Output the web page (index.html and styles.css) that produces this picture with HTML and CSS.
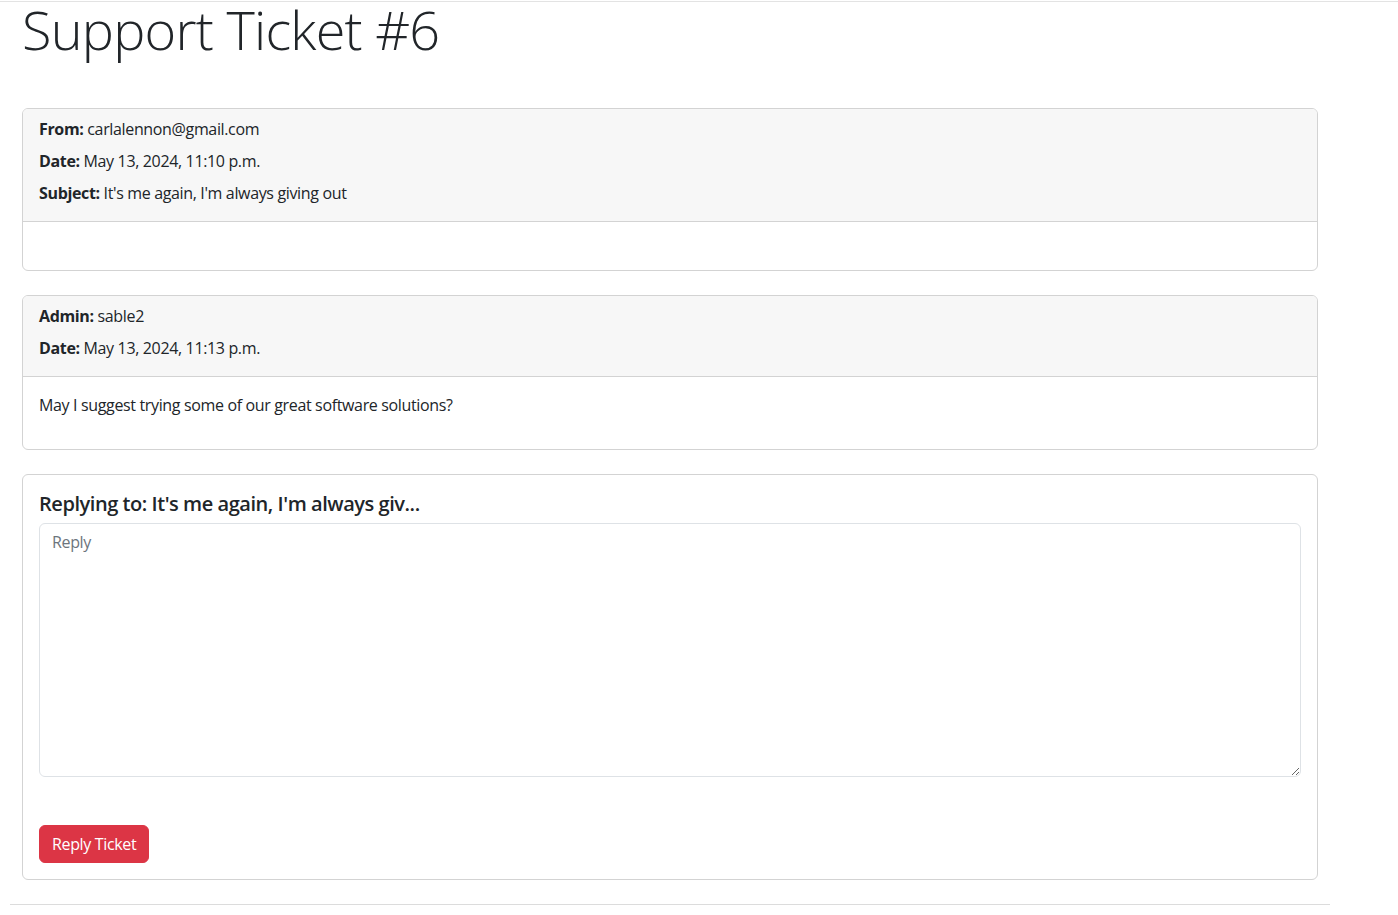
FILE: index.html
```html
<!DOCTYPE html>
<html>
<head>
<meta charset="utf-8">
<link rel="stylesheet" href="styles.css">
</head>
<body>
<div class="topline"></div>
<div class="page">
  <div class="content">
    <h1 class="title">Support Ticket #6</h1>
    <div class="card">
      <div class="card-header">
        <p><b>From:</b> carlalennon@gmail.com</p>
        <p><b>Date:</b> May 13, 2024, 11:10 p.m.</p>
        <p><b>Subject:</b> It's me again, I'm always giving out</p>
      </div>
      <div class="card-body"><p></p></div>
    </div>
    <div class="card">
      <div class="card-header">
        <p><b>Admin:</b> sable2</p>
        <p><b>Date:</b> May 13, 2024, 11:13 p.m.</p>
      </div>
      <div class="card-body"><p>May I suggest trying some of our great software solutions?</p></div>
    </div>
    <div class="card">
      <div class="card-body reply">
        <h5 class="reply-title">Replying to: It's me again, I'm always giv...</h5>
        <textarea class="reply-input" placeholder="Reply"></textarea>
        <button class="btn-danger">Reply Ticket</button>
      </div>
    </div>
  </div>
  <hr class="bottom-rule">
</div>
</body>
</html>
```
FILE: styles.css
```css
html, body { margin: 0; padding: 0; background: #fff; }
body {
  font-family: "Open Sans", "Noto Sans", sans-serif;
  font-size: 16px;
  line-height: 24px;
  letter-spacing: -0.35px;
  color: #212529;
}
.topline { height: 1px; margin-top: 1px; background: #e3e3e3; }
.page { margin-left: 10px; width: 1320px; }
.content { padding: 0 12px; }
.title {
  font-weight: 300;
  font-size: 54px;
  line-height: 60px;
  margin: -3px 0 49px 0;
  letter-spacing: -0.75px;
}
.card {
  border: 1px solid #d3d3d3;
  border-radius: 6px;
  margin-bottom: 24px;
  overflow: hidden;
}
.card-header {
  background: #f7f7f7;
  border-bottom: 1px solid #d3d3d3;
  padding: 8px 16px;
}
.card-header p { margin: 0 0 8px 0; }
.card-body { padding: 16px 16px 16px; }
.card-body p { margin: 0 0 16px 0; }
.reply { padding: 16px; display: flex; flex-direction: column; align-items: flex-start; }
.reply-title {
  font-size: 20px;
  font-weight: 600;
  line-height: 24px;
  letter-spacing: -0.45px;
  margin: 1px 0 7px 0;
}
.reply-input {
  box-sizing: border-box;
  width: 100%;
  height: 254px;
  border: 1px solid #dee2e6;
  border-radius: 6px;
  padding: 6px 12px;
  font: inherit;
  letter-spacing: inherit;
  color: #212529;
  margin: 0 0 48px 0;
  resize: vertical;
}
.reply-input::placeholder { color: #6c757d; }
.btn-danger {
  background: #dc3545;
  color: #fff;
  border: 1px solid #dc3545;
  border-radius: 6px;
  padding: 6px 12px;
  font: inherit;
  letter-spacing: inherit;
  height: 38px;
}
.bottom-rule {
  border: 0;
  border-top: 1px solid #dcdcdc;
  margin: 0;
}
```
